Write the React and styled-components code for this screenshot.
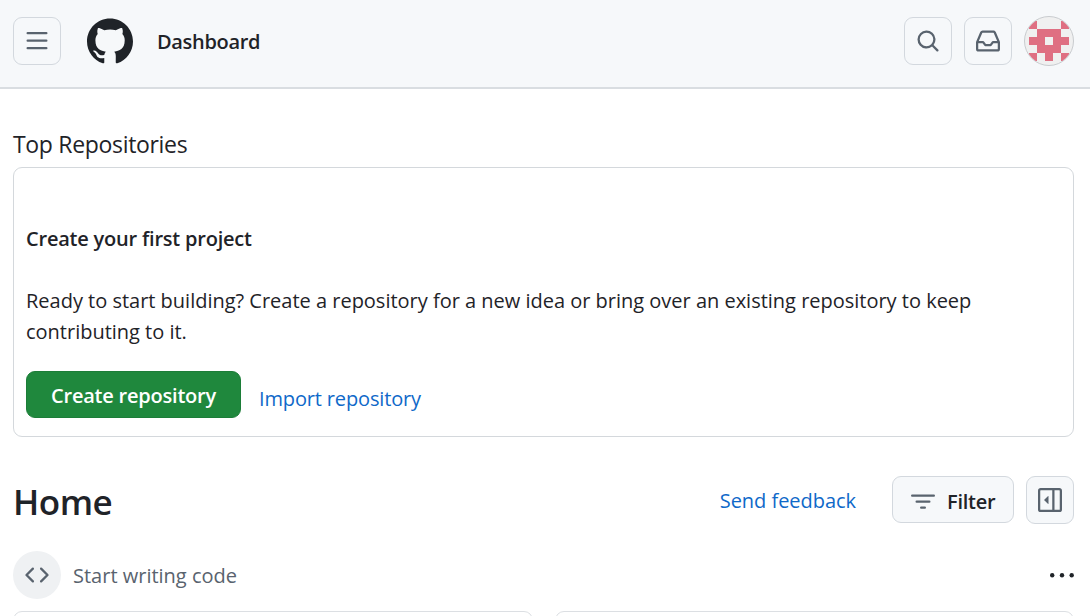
import React from 'react';
import styled, { createGlobalStyle } from 'styled-components';

const GlobalStyle = createGlobalStyle`
  * { box-sizing: border-box; }
  body {
    margin: 0;
    background: #fff;
    color: #1f2328;
    font-family: "Open Sans", "Noto Sans", sans-serif;
    font-size: 20px;
    overflow: hidden;
  }
  h1, h2, h3, p { margin: 0; }
  button { font: inherit; color: inherit; padding: 0; }
  svg { display: block; flex: none; }
`;

const Page = styled.div`
  height: 616px;
  overflow: hidden;
`;

const Header = styled.header`
  height: 89px;
  padding: 15px 16px 0 13px;
  display: flex;
  align-items: flex-start;
  background: #f6f8fa;
  border-bottom: 2px solid #d9dde1;
`;

const Group = styled.div`
  height: 52px;
  display: flex;
  align-items: center;
  gap: ${(p) => p.$gap || 0}px;
  margin-left: ${(p) => (p.$end ? 'auto' : '0')};
`;

const IconButton = styled.button`
  width: 48px;
  height: 48px;
  display: flex;
  align-items: center;
  justify-content: center;
  background: #f6f8fa;
  border: 1px solid #d3d8de;
  border-radius: 9px;
  color: #59636e;
`;

const HeaderTitle = styled.span`
  padding: 2px 0 0 24px;
  font-weight: 600;
  line-height: 30px;
  letter-spacing: -0.33px;
  white-space: nowrap;
`;

const Avatar = styled.div`
  width: 50px;
  height: 50px;
  border: 1px solid #c9cccf;
  border-radius: 50%;
  overflow: hidden;
  background: #f0f0f0;
`;

const Main = styled.main`
  padding: 40px 16px 0 13px;
`;

const SectionTitle = styled.h2`
  font-size: 23px;
  font-weight: 400;
  line-height: 30px;
  height: 38px;
  letter-spacing: -0.32px;
`;

const Card = styled.section`
  height: 270px;
  padding: 55px 12px 0;
  border: 1px solid #d4d8dc;
  border-radius: 9px;
`;

const CardTitle = styled.h3`
  font-size: 20px;
  font-weight: 600;
  line-height: 31px;
  letter-spacing: -0.21px;
`;

const CardText = styled.p`
  margin-top: 31px;
  line-height: 31px;
  white-space: nowrap;
  letter-spacing: -0.01px;
`;

const CardActions = styled.div`
  display: flex;
  gap: 18px;
  margin-top: 24px;
`;

const PrimaryButton = styled.button`
  width: 215px;
  height: 47px;
  background: #1f883d;
  border: 1px solid #1c7d38;
  border-radius: 9px;
  color: #fff;
  font-weight: 600;
  line-height: 30px;
  letter-spacing: -0.22px;
  padding-top: 3px;
  white-space: nowrap;
`;

const Link = styled.a`
  color: #0f69c9;
  line-height: 30px;
  white-space: nowrap;
  letter-spacing: ${(p) => p.$tracking || 0}px;
  padding-top: ${(p) => p.$drop || 0}px;
`;

const HomeBar = styled.div`
  height: 48px;
  margin-top: 39px;
  display: flex;
  align-items: flex-start;
`;

const HomeTitle = styled.h1`
  flex: 1;
  font-size: 35px;
  font-weight: 600;
  line-height: 52px;
  letter-spacing: -0.5px;
`;

const FilterButton = styled.button`
  width: 122px;
  height: 47px;
  margin: 0 12px 0 36px;
  padding: 4px 0 0 18px;
  display: flex;
  align-items: center;
  gap: 12px;
  background: #f6f8fa;
  border: 1px solid #d3d8de;
  border-radius: 9px;
  font-weight: 600;
  letter-spacing: -0.25px;
  svg { color: #59636e; }
`;

const FeedHeading = styled.div`
  height: 48px;
  margin-top: 27px;
  display: flex;
  align-items: center;
`;

const CodeBadge = styled.span`
  width: 48px;
  height: 48px;
  border-radius: 50%;
  display: flex;
  align-items: center;
  justify-content: center;
  background: #eff1f3;
  color: #59636e;
`;

const FeedLabel = styled.span`
  flex: 1;
  margin-left: 12px;
  padding-top: 2px;
  color: #59636e;
  line-height: 30px;
`;

const FeedCards = styled.div`
  display: grid;
  grid-template-columns: 520px 1fr;
  gap: 22px;
  margin-top: 12px;
`;

const FeedCard = styled.div`
  height: 60px;
  border: 1px solid #dcdfe3;
  border-radius: 9px;
`;

const paths = {
  menu: 'M1 2.75A.75.75 0 0 1 1.75 2h12.5a.75.75 0 0 1 0 1.5H1.75A.75.75 0 0 1 1 2.75Zm0 5A.75.75 0 0 1 1.75 7h12.5a.75.75 0 0 1 0 1.5H1.75A.75.75 0 0 1 1 7.75ZM1.75 12h12.5a.75.75 0 0 1 0 1.5H1.75a.75.75 0 0 1 0-1.5Z',
  search: 'M10.68 11.74a6 6 0 0 1-7.922-8.982 6 6 0 0 1 8.982 7.922l3.04 3.04a.749.749 0 0 1-.326 1.275.749.749 0 0 1-.734-.215ZM11.5 7a4.499 4.499 0 1 0-8.997 0A4.499 4.499 0 0 0 11.5 7Z',
  inbox: 'M2.8 2.06A1.75 1.75 0 0 1 4.41 1h7.18c.7 0 1.333.417 1.61 1.06l2.74 6.395c.04.093.06.194.06.295v4.5A1.75 1.75 0 0 1 14.25 15H1.75A1.75 1.75 0 0 1 0 13.25v-4.5c0-.101.02-.202.06-.295Zm1.61.44a.25.25 0 0 0-.23.152L1.887 8H4.75a.75.75 0 0 1 .6.3L6.625 10h2.75l1.275-1.7a.75.75 0 0 1 .6-.3h2.863L11.82 2.652a.25.25 0 0 0-.23-.152Zm10.09 7h-2.875l-1.275 1.7a.75.75 0 0 1-.6.3h-3.5a.75.75 0 0 1-.6-.3L4.375 9.5H1.5v3.75c0 .138.112.25.25.25h12.5a.25.25 0 0 0 .25-.25Z',
  filter: 'M.75 3h14.5a.75.75 0 0 1 0 1.5H.75a.75.75 0 0 1 0-1.5ZM3 7.75A.75.75 0 0 1 3.75 7h8.5a.75.75 0 0 1 0 1.5h-8.5A.75.75 0 0 1 3 7.75Zm3 4a.75.75 0 0 1 .75-.75h2.5a.75.75 0 0 1 0 1.5h-2.5a.75.75 0 0 1-.75-.75Z',
  code: 'm11.28 3.22 4.25 4.25a.75.75 0 0 1 0 1.06l-4.25 4.25a.749.749 0 0 1-1.275-.326.749.749 0 0 1 .215-.734L13.94 8l-3.72-3.72a.749.749 0 0 1 .326-1.275.749.749 0 0 1 .734.215Zm-6.56 0a.751.751 0 0 1 1.042.018.751.751 0 0 1 .018 1.042L2.06 8l3.72 3.72a.749.749 0 0 1-.326 1.275.749.749 0 0 1-.734-.215L.47 8.53a.75.75 0 0 1 0-1.06Z',
  sidebar: 'm4.177 7.823 2.396-2.396A.25.25 0 0 1 7 5.604v4.792a.25.25 0 0 1-.427.177L4.177 8.177a.25.25 0 0 1 0-.354ZM0 1.75C0 .784.784 0 1.75 0h12.5C15.216 0 16 .784 16 1.75v12.5A1.75 1.75 0 0 1 14.25 16H1.75A1.75 1.75 0 0 1 0 14.25Zm1.75-.25a.25.25 0 0 0-.25.25v12.5c0 .138.112.25.25.25H9.5v-13Zm12.5 13a.25.25 0 0 0 .25-.25V1.75a.25.25 0 0 0-.25-.25H11v13Z',
};

const Icon = ({ name }) => (
  <svg width="24" height="24" viewBox="0 0 16 16" fill="currentColor" aria-hidden="true">
    <path d={paths[name]} />
  </svg>
);

const MarkSvg = styled.svg`
  margin-left: 24px;
`;

const GitHubMark = () => (
  <MarkSvg width="48" height="48" viewBox="0 0 24 24" fill="#1f2328" aria-hidden="true">
    <path d="M12.5.75C6.146.75 1 5.896 1 12.25c0 5.089 3.292 9.387 7.863 10.91.575.101.79-.244.79-.546 0-.273-.014-1.178-.014-2.142-2.889.532-3.636-.704-3.866-1.35-.13-.331-.69-1.352-1.18-1.625-.402-.216-.977-.748-.014-.762.906-.014 1.553.834 1.769 1.179 1.035 1.74 2.688 1.25 3.349.948.1-.747.402-1.25.733-1.538-2.559-.287-5.232-1.279-5.232-5.678 0-1.25.445-2.285 1.178-3.09-.115-.288-.517-1.467.115-3.048 0 0 .963-.302 3.163 1.179.92-.259 1.897-.388 2.875-.388.977 0 1.955.13 2.875.388 2.2-1.495 3.162-1.179 3.162-1.179.633 1.581.23 2.76.115 3.048.733.805 1.179 1.825 1.179 3.09 0 4.413-2.688 5.39-5.247 5.678.417.36.776 1.05.776 2.128 0 1.538-.014 2.774-.014 3.162 0 .302.216.662.79.547C20.709 21.637 24 17.324 24 12.25 24 5.896 18.854.75 12.5.75Z" />
  </MarkSvg>
);

const Identicon = () => (
  <svg width="48" height="48" viewBox="0 0 48 48" shapeRendering="crispEdges" aria-hidden="true">
    <path
      fill="#df6f82"
      d="M4 4h8v8h-8zM36 4h8v8h-8zM12 12h24v8h-24zM4 20h16v8h-16zM28 20h16v8h-16zM12 28h24v8h-24zM4 36h8v8h-8zM20 36h8v8h-8zM36 36h8v8h-8z"
    />
  </svg>
);

const Dots = () => (
  <svg width="26" height="24" viewBox="0 0 26 24" fill="#1f2328" aria-hidden="true">
    <circle cx="4.2" cy="12.2" r="2.2" />
    <circle cx="14" cy="12.2" r="2.2" />
    <circle cx="23.7" cy="12.2" r="2.2" />
  </svg>
);

export default function App() {
  return (
    <Page>
      <GlobalStyle />
      <Header>
        <Group>
          <IconButton aria-label="Open menu"><Icon name="menu" /></IconButton>
          <GitHubMark />
          <HeaderTitle>Dashboard</HeaderTitle>
        </Group>
        <Group $end $gap={12}>
          <IconButton aria-label="Search"><Icon name="search" /></IconButton>
          <IconButton aria-label="Inbox"><Icon name="inbox" /></IconButton>
          <Avatar><Identicon /></Avatar>
        </Group>
      </Header>
      <Main>
        <SectionTitle>Top Repositories</SectionTitle>
        <Card>
          <CardTitle>Create your first project</CardTitle>
          <CardText>
            Ready to start building? Create a repository for a new idea or bring over an existing repository to keep
            <br />
            contributing to it.
          </CardText>
          <CardActions>
            <PrimaryButton>Create repository</PrimaryButton>
            <Link $drop={13} $tracking={-0.15}>Import repository</Link>
          </CardActions>
        </Card>
        <HomeBar>
          <HomeTitle>Home</HomeTitle>
          <Link $drop={10} $tracking={-0.04}>Send feedback</Link>
          <FilterButton><Icon name="filter" />Filter</FilterButton>
          <IconButton aria-label="Toggle sidebar"><Icon name="sidebar" /></IconButton>
        </HomeBar>
        <FeedHeading>
          <CodeBadge><Icon name="code" /></CodeBadge>
          <FeedLabel>Start writing code</FeedLabel>
          <Dots />
        </FeedHeading>
        <FeedCards>
          <FeedCard />
          <FeedCard />
        </FeedCards>
      </Main>
    </Page>
  );
}
